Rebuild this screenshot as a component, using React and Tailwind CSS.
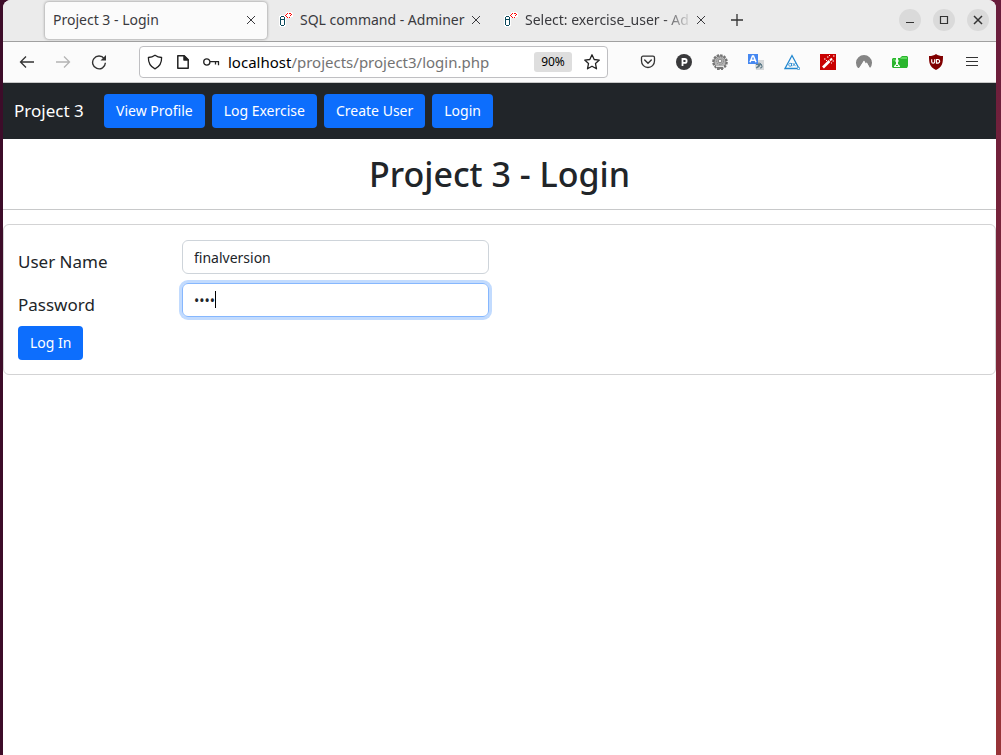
import React, { useState } from "react";

function CloseIcon() {
  return (
    <svg width="10" height="10" viewBox="0 0 10 10" fill="none" stroke="#3a3a3e" strokeWidth="1">
      <path d="M1 1l8 8M9 1L1 9" />
    </svg>
  );
}

function DatabaseIcon() {
  return (
    <svg className="shrink-0" width="16" height="16" viewBox="0 0 16 16" shapeRendering="crispEdges">
      <path d="M2 3h5v1h1v10H7v1H2v-1H1V4h1z" fill="#fff" />
      <path d="M3 4h3v1H3zM3 7h3v1H3zM2 5h1v8H2zM6 5h1v8H6zM3 13h3v1H3z" fill="#0b4a5c" />
      <path d="M8 0h6v1h1v4h-2v1H8V5H7V2h1z" fill="#fff" />
      <path d="M9 1h1v1H9zM8 2h1v1H8zM7 3h1v1H7zM8 4h1v1H8zM9 5h1v1H9zM11 1h2v1h-2zM13 2h1v1h-1zM12 3h1v1h-1zM11 5h1v1h-1z" fill="#f00" />
    </svg>
  );
}

function Tab({ title, active, fade, icon }) {
  return (
    <div
      role="tab"
      aria-selected={!!active}
      className={
        active
          ? "flex h-[37px] w-[222px] shrink-0 items-center rounded bg-[#fbfbfb] pl-2 pr-2 shadow-[0_0_3px_rgba(0,0,0,0.45)]"
          : "flex h-[37px] w-56 min-w-0 items-center pl-[10px] pr-2"
      }
    >
      {icon && <span className="mr-1.5 flex"><DatabaseIcon /></span>}
      <span
        className={
          fade
            ? "min-w-0 flex-1 overflow-hidden whitespace-nowrap text-sm text-[#3a3a3e] [mask-image:linear-gradient(to_right,black_82%,transparent)]"
            : "min-w-0 flex-1 overflow-hidden whitespace-nowrap text-sm text-[#3a3a3e]"
        }
      >
        {title}
      </span>
      <button type="button" aria-label="Close tab" className="flex h-4 w-4 shrink-0 items-center justify-center">
        <CloseIcon />
      </button>
    </div>
  );
}

function WindowButton({ label, children }) {
  return (
    <button type="button" aria-label={label} className="flex h-[22px] w-[22px] items-center justify-center rounded-full bg-[#dadada]">
      <svg width="12" height="12" viewBox="0 0 12 12" fill="none" stroke="#333" strokeWidth="1.2">{children}</svg>
    </button>
  );
}

function ToolButton({ label, children }) {
  return (
    <button type="button" aria-label={label} className="flex h-9 w-9 shrink-0 items-center justify-center">
      <svg width="16" height="16" viewBox="0 0 16 16" fill="none">{children}</svg>
    </button>
  );
}

function TabStrip() {
  return (
    <header className="flex h-[41px] items-center bg-[#ebebeb] pb-px pl-[42px] pr-[7px]">
      <div role="tablist" className="flex min-w-0 gap-[1px]">
        <Tab title="Project 3 - Login" active />
        <Tab title="SQL command - Adminer" icon />
        <Tab title="Select: exercise_user - Ad" icon fade />
      </div>
      <button type="button" aria-label="New tab" className="ml-2 flex h-6 w-6 shrink-0 items-center justify-center">
        <svg width="14" height="14" viewBox="0 0 14 14" stroke="#333" strokeWidth="1.3"><path d="M7 1v12M1 7h12" /></svg>
      </button>
      <div className="ml-auto flex shrink-0 gap-3">
        <WindowButton label="Minimize"><path d="M2 8.5h8" /></WindowButton>
        <WindowButton label="Maximize"><path d="M2.5 2.5h7v7h-7z" /></WindowButton>
        <WindowButton label="Close"><path d="M2 2l8 8M10 2l-8 8" strokeWidth="1.5" /></WindowButton>
      </div>
    </header>
  );
}

function AddressBar() {
  return (
    <div className="flex h-8 min-w-0 flex-1 items-center rounded border border-[#bfbfc2] bg-white pl-[7px] pr-[7px]">
      <svg width="16" height="16" viewBox="0 0 16 16" fill="none" stroke="#222" strokeWidth="1.3" strokeLinejoin="round">
        <path d="M8 1.2c2 1.4 4 2.1 6.6 2.3.2 5.200-1.800 9-6.600 11.300C3.200 12.500 1.200 8.700 1.400 3.500 4 3.300 6 2.600 8 1.200z" />
      </svg>
      <svg className="ml-3" width="16" height="16" viewBox="0 0 16 16" fill="none" stroke="#222" strokeWidth="1.5" strokeLinejoin="round">
        <path d="M2.800 1.700h6.400l4 4v8.600H2.800z" />
        <path d="M9 2v4h4z" fill="#222" />
      </svg>
      <svg className="ml-3" width="17" height="16" viewBox="0 0 17 16" fill="none" stroke="#222" strokeWidth="1.3">
        <circle cx="3.800" cy="8" r="3.100" />
        <path d="M7 7.600h9M12.500 7.600v3M15.500 7.600v3.600" />
      </svg>
      <div className="ml-2 min-w-0 flex-1 overflow-hidden whitespace-nowrap text-[15px] text-[#737373]">
        <span className="text-black">localhost</span>/projects/project3/login.php
      </div>
      <button type="button" className="h-5 w-[38px] rounded-[3px] bg-[#dedede] text-xs text-black">90%</button>
      <button type="button" aria-label="Bookmark this page" className="ml-3 flex">
        <svg width="16" height="16" viewBox="0 0 16 16" fill="none" stroke="#222" strokeWidth="1.3" strokeLinejoin="round">
          <path d="M8 .8l2.200 4.700 5.100.6-3.800 3.500 1 5.200L8 12.200l-4.500 2.600 1-5.200L.7 6.100l5.100-.6z" />
        </svg>
      </button>
    </div>
  );
}

function Toolbar() {
  return (
    <div className="flex h-[42px] items-center border-b border-t border-b-[#c8c8c8] border-t-[#a0a0a0] bg-[#fbfbfb] pl-[6px] pr-[6px]">
      <ToolButton label="Back"><path d="M15 8H1.500M7 2.500L1.500 8 7 13.500" stroke="#333" strokeWidth="1.300" /></ToolButton>
      <ToolButton label="Forward"><path d="M1 8h13.500M9 2.500L14.500 8 9 13.500" stroke="#b4b4b4" strokeWidth="1.300" /></ToolButton>
      <ToolButton label="Reload">
        <path d="M13.200 4.700A6.400 6.400 0 1 0 14.400 8.800" stroke="#333" strokeWidth="1.400" />
        <path d="M15 1v5.500H9.500z" fill="#333" />
      </ToolButton>
      <div className="ml-[22px] flex min-w-0 flex-1"><AddressBar /></div>
      <div className="ml-[22px] flex shrink-0">
        <ToolButton label="Pocket">
          <path d="M3 2.200h10a1.500 1.500 0 0 1 1.500 1.500V7a6.500 6.500 0 0 1-13 0V3.700A1.500 1.500 0 0 1 3 2.200z" stroke="#333" strokeWidth="1.300" />
          <path d="M4.700 6L8 9.200 11.300 6" stroke="#333" strokeWidth="1.400" strokeLinecap="round" />
        </ToolButton>
        <ToolButton label="P">
          <circle cx="8" cy="8" r="8" fill="#39393b" />
          <path d="M6.500 12V5h2.200a1.900 1.900 0 0 1 0 3.900H6.500" stroke="#fff" strokeWidth="1.800" />
        </ToolButton>
        <ToolButton label="Settings">
          <circle cx="8" cy="8" r="6.600" stroke="#757575" strokeWidth="2.400" strokeDasharray="2.400 1.050" />
          <circle cx="8" cy="8" r="6" fill="#b4b4b4" stroke="#666" strokeWidth=".8" />
          <circle cx="8" cy="7" r="3.600" stroke="#888" strokeDasharray="1.500 1" />
          <circle cx="8" cy="7" r="1.800" fill="#f5f5f5" stroke="#666" strokeWidth=".7" />
          <path d="M4 12h8v1H4z" fill="#e4e4e4" />
          <path d="M5 13h6v3H9v-1H7v1H5z" fill="#777" />
        </ToolButton>
        <ToolButton label="Translate">
          <path d="M6 6h10v10H8z" fill="#d5d8da" />
          <path d="M0 0h10v10H0z" fill="#4688f1" />
          <path d="M2 8.300L4.500 2h1L8 8.300M3 6.200h4" stroke="#fff" strokeWidth="1.500" />
          <path d="M8 10.500h6M11 8.500c0 4-1 5-3 5.500M12.500 9c-.5 3-2 4.500-4 4M13 11c2 1 1 3-1 3" stroke="#607d8b" strokeWidth="1.200" />
        </ToolButton>
        <ToolButton label="Accessibility check">
          <path d="M13.200 14.500H1L8 1.500l6.200 11.500" stroke="#2288d0" strokeWidth="1.300" />
          <circle cx="14.500" cy="14.500" r="1.200" fill="#fff" stroke="#2288d0" />
          <path d="M7.500 9v3.200M7.500 10.600a1.400 1.500 0 1 1-.1-.4M8.600 9l3 3.200M11.500 9l-3 3.200" stroke="#2288d0" strokeWidth=".9" />
        </ToolButton>
        <ToolButton label="Magic wand">
          <path d="M0 0h16v16H0z" fill="#c90000" />
          <path d="M3 13.500L9.500 7" stroke="#fff" strokeWidth="2.600" />
          <path d="M10 6.500l2-2" stroke="#fff" strokeWidth="2" />
          <path d="M4 5h1.500M7 3h1.500M9 1.500h1M13 2h1.500M12.500 7h1.500M6 6.500h1M11 9h1" stroke="#fff" />
        </ToolButton>
        <ToolButton label="VPN">
          <path d="M2 14A8 7.800 0 1 1 14 14L10.700 8.600l-.9 1.300L8 6.800 5 11.500 3.300 14z" fill="#858585" />
          <path d="M2.800 14.500L8 6.500l2 3.200.8-1.100 3 5.900z" fill="#fbfbfb" />
        </ToolButton>
        <ToolButton label="Folder">
          <path d="M0 5l1-1h7l2-2h5l1 1v9l-1 2H1l-1-1z" fill="#29b52d" />
          <path d="M10 3h5v2H8z" fill="#5bd85a" />
          <path d="M1 5h6v2H1z" fill="#45c847" />
          <path d="M4 4h2v2l1 1-1 1v2l2 2v1H2v-1l2-2V8L3 7l1-1z" fill="#f4fff4" />
          <path d="M4 11h2v1H4z" fill="#29b52d" />
        </ToolButton>
        <ToolButton label="Ad blocker">
          <path d="M8 0c2 1.500 4 2 7 2 0 7-.5 11-7 14C1.500 13 1 9 1 2c3 0 5-.5 7-2z" fill="#800000" />
          <path d="M3.700 5.200v2.500a1.500 1.500 0 0 0 3 0V5.200" stroke="#fff" strokeWidth="1.200" />
          <path d="M8.500 5.500h1.700a1.900 1.900 0 0 1 0 3.700H8.500z" stroke="#fff" strokeWidth="1.200" />
        </ToolButton>
        <ToolButton label="Menu"><path d="M2 3.500h12M2 7.500h12M2 11.500h12" stroke="#333" strokeWidth="1.200" /></ToolButton>
      </div>
    </div>
  );
}

const links = ["View Profile", "Log Exercise", "Create User", "Login"];

function LoginForm() {
  const [name, setName] = useState("finalversion");
  const [password, setPassword] = useState("1234");
  return (
    <form
      className="mt-[14px] rounded-md border border-[#d3d3d4] px-[14px] pb-[14px] pt-[15px]"
      onSubmit={(e) => e.preventDefault()}
    >
      <div className="grid grid-cols-[164px_minmax(0,307px)] gap-y-2">
        <label htmlFor="user" className="pt-2 text-[17px] leading-[27px]">User Name</label>
        <input
          id="user"
          type="text"
          value={name}
          onChange={(e) => setName(e.target.value)}
          className="h-[34px] w-full rounded-md border border-[#ced4da] px-[11px] text-sm outline-none"
        />
        <label htmlFor="password" className="pt-2 text-[17px] leading-[27px]">Password</label>
        <div className="relative">
          <input
            id="password"
            type="password"
            value={password}
            onChange={(e) => setPassword(e.target.value)}
            className="h-[34px] w-full rounded-md border border-[#86b7fe] px-[11px] text-sm shadow-[0_0_0_3px_#c2dbfe] outline-none"
          />
          <span className="absolute left-[33px] top-2 h-[17px] w-px bg-black" />
        </div>
      </div>
      <button type="submit" className="mt-2 h-[34px] rounded bg-[#0d6efd] px-3 text-sm text-white">Log In</button>
    </form>
  );
}

export default function App() {
  return (
    <div className="flex min-h-screen bg-[linear-gradient(to_right,#3d0c29_50%,transparent_50%),linear-gradient(to_bottom,#681c3c,#8b2d38_70%,#983438)] pl-[3px] pr-[5px] font-['Noto_Sans',sans-serif] text-[#212529]">
      <div className="flex min-w-0 flex-1 flex-col overflow-hidden rounded-t-lg bg-white">
        <TabStrip />
        <Toolbar />
        <nav className="flex h-14 items-center bg-[#212529] pl-[11px]">
          <a href="#" className="w-[90px] whitespace-nowrap text-[17px] text-white">Project 3</a>
          <div className="flex gap-[7px]">
            {links.map((text) => (
              <a key={text} href="#" className="flex h-[34px] items-center whitespace-nowrap rounded bg-[#0d6efd] px-3 text-sm text-white">
                {text}
              </a>
            ))}
          </div>
        </nav>
        <main>
          <h1 className="flex h-[70px] items-center justify-center text-[34px] font-medium">Project 3 - Login</h1>
          <hr className="border-[#c8c9ca]" />
          <LoginForm />
        </main>
      </div>
    </div>
  );
}
